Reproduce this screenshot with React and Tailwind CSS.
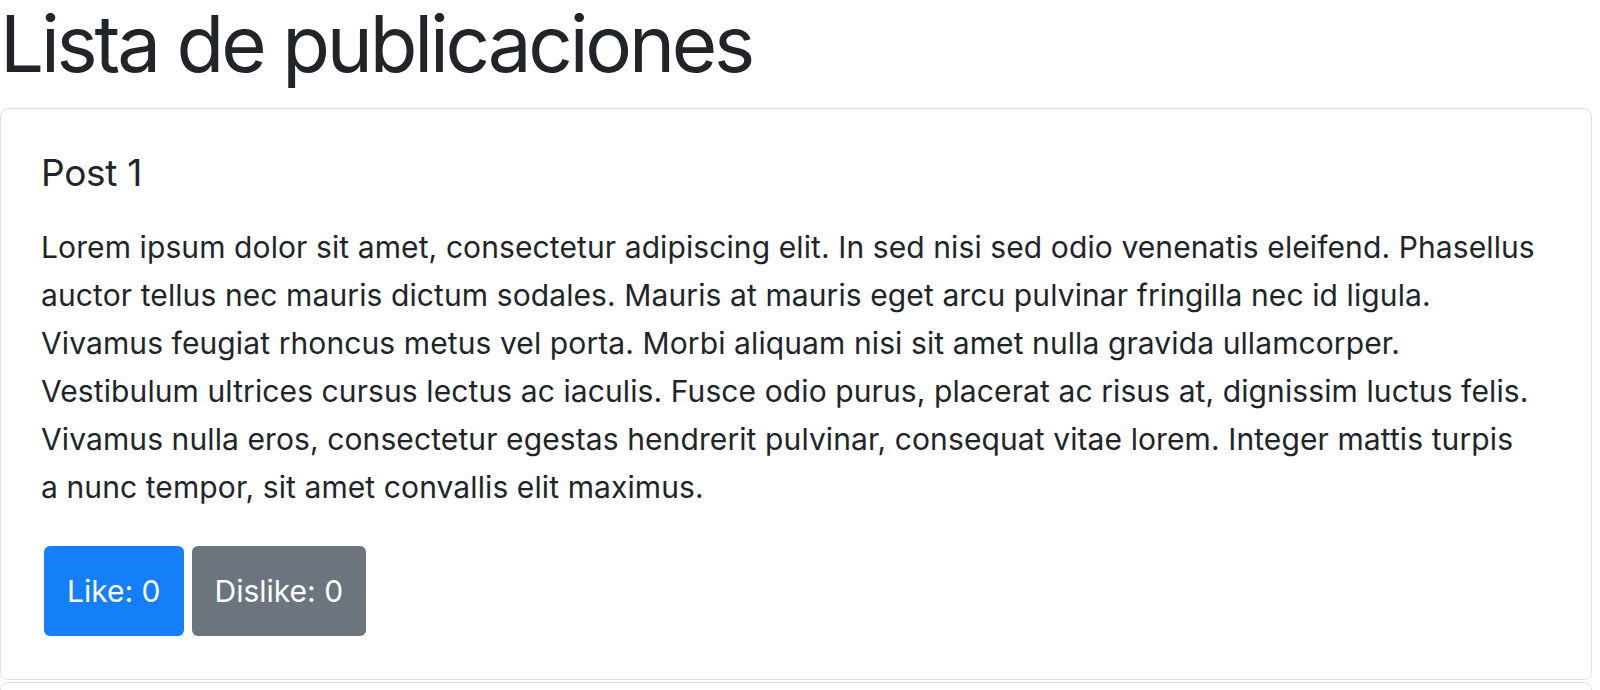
export default function App() {
  const lines = [
    "Lorem ipsum dolor sit amet, consectetur adipiscing elit. In sed nisi sed odio venenatis eleifend. Phasellus",
    "auctor tellus nec mauris dictum sodales. Mauris at mauris eget arcu pulvinar fringilla nec id ligula.",
    "Vivamus feugiat rhoncus metus vel porta. Morbi aliquam nisi sit amet nulla gravida ullamcorper.",
    "Vestibulum ultrices cursus lectus ac iaculis. Fusce odio purus, placerat ac risus at, dignissim luctus felis.",
    "Vivamus nulla eros, consectetur egestas hendrerit pulvinar, consequat vitae lorem. Integer mattis turpis",
    "a nunc tempor, sit amet convallis elit maximus.",
  ];
  return (
    <div className="min-h-[690px] bg-white text-[#212529] font-['Inter','Liberation_Sans',sans-serif] overflow-hidden">
      <h1 className="text-[78px] leading-[96px] -mt-[4px] mb-[16px] font-normal tracking-[-3.2px]">
        Lista de publicaciones
      </h1>
      <div className="w-[1592px] border border-[#dfdfdf] rounded-[8px] p-[40px]">
        <h5 className="text-[37px] leading-[48px] mb-[26px] font-normal tracking-[-0.3px]">Post 1</h5>
        <p className="text-[30px] leading-[48px] mb-[32px] tracking-[0.1px]">
          {lines.map((l, i) => (
            <span key={i} className="block whitespace-nowrap">
              {l}
            </span>
          ))}
        </p>
        <div className="flex gap-[8px] p-[3px]">
          <button className="bg-[#157ef9] text-white text-[30px] leading-[48px] px-[23px] py-[21px] rounded-[6px]">
            Like: 0
          </button>
          <button className="bg-[#6c757d] text-white text-[30px] leading-[48px] px-[23px] py-[21px] rounded-[6px]">
            Dislike: 0
          </button>
        </div>
      </div>
      <div className="w-[1592px] mt-[2px] h-[60px] border border-[#dfdfdf] rounded-[8px]"></div>
    </div>
  );
}
